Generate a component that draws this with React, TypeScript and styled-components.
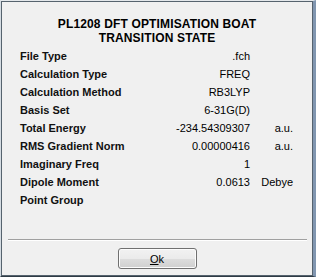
import React from "react";
import styled, { createGlobalStyle } from "styled-components";

const PageStyle = createGlobalStyle`
  html, body {
    margin: 0;
    padding: 0;
    background: #f0f0f0;
  }
  body {
    font-family: "Liberation Sans", Arial, sans-serif;
    font-size: 11px;
    color: #000;
  }
`;

const Frame = styled.div`
  box-sizing: border-box;
  width: 316px;
  height: 277px;
  border-top: 1px solid #e4e8eb;
  border-left: 1px solid #d5dce2;
  border-right: 3px solid #8196b0;
  border-bottom: 1px solid #2f3b45;
  display: flex;
`;

const Dialog = styled.div`
  flex: 1;
  display: flex;
  flex-direction: column;
  border: 1px solid #56636e;
  background: #f0f0f0;
`;

const Title = styled.h1`
  margin: 15px 0 2px;
  font-size: 12px;
  line-height: 14px;
  font-weight: bold;
  text-align: center;
  letter-spacing: 0.15px;
  color: #000;
`;

const Rows = styled.div`
  display: flex;
  flex-direction: column;
`;

const Row = styled.div`
  display: grid;
  grid-template-columns: 130px 100px 43px;
  height: 18px;
  align-items: center;
  padding-left: 18px;
  line-height: 13px;
`;

const Label = styled.span`
  font-weight: bold;
  color: #111;
`;

const Value = styled.span`
  text-align: right;
`;

const Unit = styled.span`
  text-align: right;
`;

const Spacer = styled.div`
  flex: 1;
`;

const Separator = styled.div`
  height: 1px;
  margin: 0 5px 0 6px;
  background: #a0a0a0;
  border-bottom: 1px solid #ffffff;
`;

const ButtonRow = styled.div`
  display: flex;
  justify-content: center;
  padding: 7px 0 6px 0;
`;

const Button = styled.button`
  box-sizing: border-box;
  width: 79px;
  height: 21px;
  margin-left: 0;
  border: 1px solid #707070;
  border-radius: 3px;
  background: linear-gradient(#f2f2f2 0%, #ebebeb 50%, #dddddd 51%, #cfcfcf 100%);
  box-shadow: inset 0 0 0 1px #fcfcfc;
  font-family: "Liberation Sans", Arial, sans-serif;
  font-size: 11px;
  color: #000;
  padding: 0;
  u {
    text-decoration: underline;
  }
`;

type Item = { label: string; value?: string; unit?: string };

const items: Item[] = [
  { label: "File Type", value: ".fch" },
  { label: "Calculation Type", value: "FREQ" },
  { label: "Calculation Method", value: "RB3LYP" },
  { label: "Basis Set", value: "6-31G(D)" },
  { label: "Total Energy", value: "-234.54309307", unit: "a.u." },
  { label: "RMS Gradient Norm", value: "0.00000416", unit: "a.u." },
  { label: "Imaginary Freq", value: "1" },
  { label: "Dipole Moment", value: "0.0613", unit: "Debye" },
  { label: "Point Group" },
];

const App = () => {
  return (
    <>
      <PageStyle />
      <Frame>
        <Dialog>
          <Title>
            PL1208 DFT OPTIMISATION BOAT
            <br />
            TRANSITION STATE
          </Title>
          <Rows>
            {items.map((it) => (
              <Row key={it.label}>
                <Label>{it.label}</Label>
                <Value>{it.value}</Value>
                <Unit>{it.unit}</Unit>
              </Row>
            ))}
          </Rows>
          <Spacer />
          <Separator />
          <ButtonRow>
            <Button>
              <u>O</u>k
            </Button>
          </ButtonRow>
        </Dialog>
      </Frame>
    </>
  );
};

export default App;
